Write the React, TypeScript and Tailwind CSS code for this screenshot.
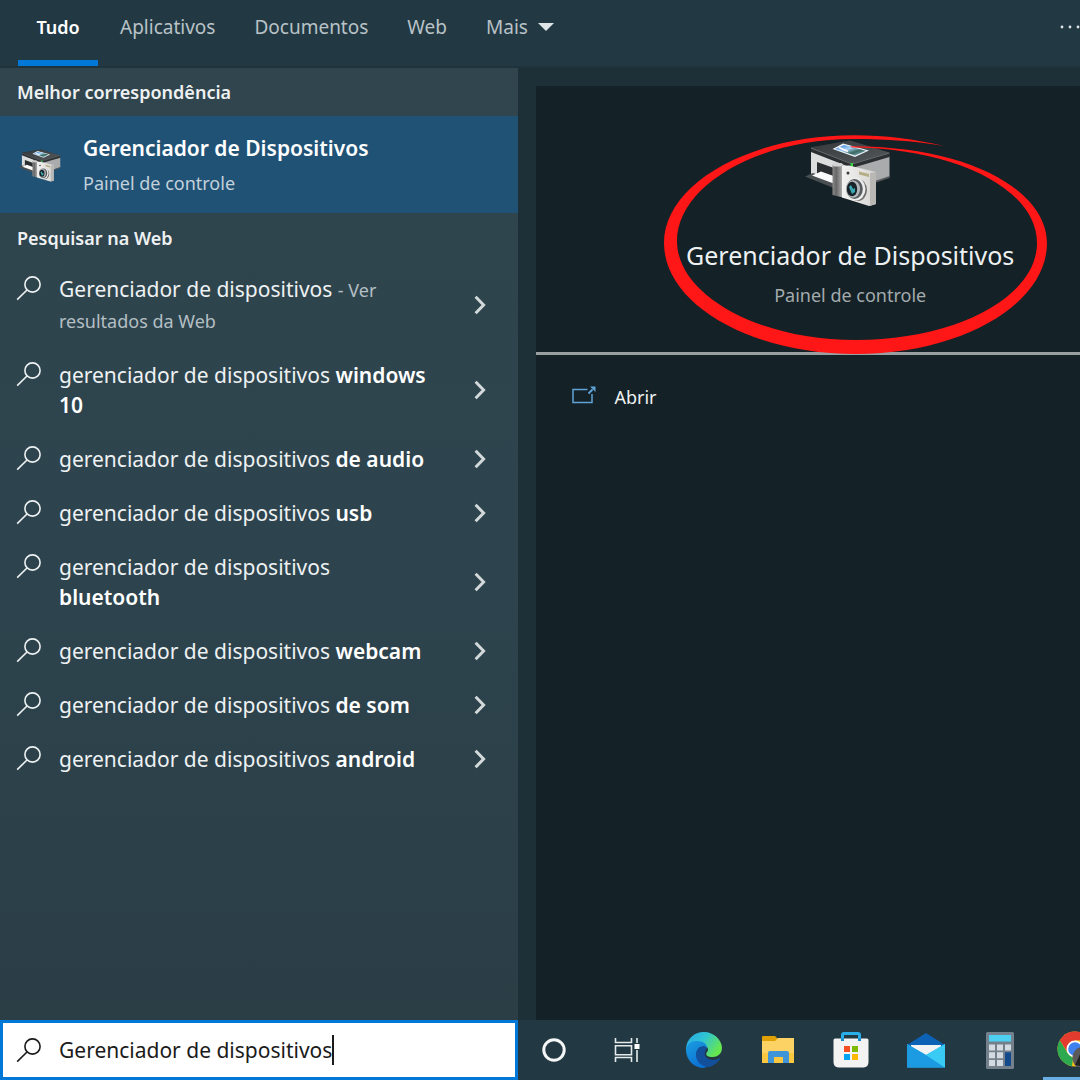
import { useState } from "react";

const tabs = ["Tudo", "Aplicativos", "Documentos", "Web"];

const suggestions = [
  "windows 10",
  "de audio",
  "usb",
  "bluetooth",
  "webcam",
  "de som",
  "android",
];

function SearchIcon() {
  return (
    <svg viewBox="0 0 26 26" className="h-[26px] w-[26px] shrink-0" fill="none" stroke="currentColor" aria-hidden="true">
      <circle cx="16.5" cy="9.5" r="7.6" strokeWidth="1.6" />
      <path d="M11 15 1.2 24.6" strokeWidth="1.6" />
    </svg>
  );
}

function Chevron() {
  return (
    <svg viewBox="0 0 12 20" className="h-5 w-3 shrink-0" fill="none" stroke="#d3d9db" strokeWidth="3" aria-hidden="true">
      <path d="M1.6 1.8 9.6 10l-8 8.2" />
    </svg>
  );
}

function DeviceIcon({ className }: { className: string }) {
  return (
    <svg viewBox="0 0 86 70" className={className} aria-hidden="true">
      <defs>
        <linearGradient id="lid" x1="0" y1="0" x2="1" y2="1">
          <stop offset="0" stopColor="#34383b" />
          <stop offset="1" stopColor="#54595c" />
        </linearGradient>
        <linearGradient id="grip" x1="0" x2="1">
          <stop offset="0" stopColor="#8b8b8b" />
          <stop offset=".35" stopColor="#666" />
          <stop offset="1" stopColor="#b5b5b5" />
        </linearGradient>
        <linearGradient id="body" x1="0" x2="1">
          <stop offset="0" stopColor="#f2f2f0" />
          <stop offset="1" stopColor="#d6d5d2" />
        </linearGradient>
        <linearGradient id="photo" x1="0" y1="0" x2="1" y2="1">
          <stop offset="0" stopColor="#2f74cf" />
          <stop offset=".4" stopColor="#a9d3f5" />
          <stop offset=".65" stopColor="#38685f" />
          <stop offset="1" stopColor="#9dc3df" />
        </linearGradient>
      </defs>
      <path d="M6 14 47 28v24L6 38z" fill="#dcdddd" />
      <path d="M47 29 84.500 19v21L47 52z" fill="#a9abac" />
      <path d="M70 44 84.500 39v2L70 46z" fill="#55585a" />
      <path d="M6 10 45 3.500 84.500 16v4L47 31 6 15z" fill="#2b2f32" />
      <path d="M6 10.500 45 3.500 84.500 15.500 47 26.500z" fill="url(#lid)" />
      <path d="M6 11 47 27l37.500-11" fill="none" stroke="#777c7f" strokeWidth=".8" />
      <path d="M27.500 12 38 6.500 64 13.500 50 20z" fill="#e9f2f8" />
      <path d="M30 12 39 8l22 5.700-11 4.800z" fill="url(#photo)" />
      <path d="m34 10.500 9 4" stroke="#fff" strokeWidth="1.600" />
      <path d="m12 25 17 6v11l-17-5z" fill="#2b2e31" />
      <path d="M0 39.500 8 36l22 8v7.500z" fill="#4a4f52" />
      <path d="m7 38.500 9-4 14 5V47z" fill="#fafafa" />
      <path d="M45.500 26h2.500v4h-2.500z" fill="#3bd13f" />
      <path d="M27.500 28c1.500-3 8.500-3 10.500 0v32.500l-10.500-2.500z" fill="url(#grip)" />
      <ellipse cx="32.700" cy="27.700" rx="5.200" ry="1.900" fill="#d4d4d4" />
      <path d="m37 29 7-.5L71 35v32l-7 2-27-8.500z" fill="url(#body)" />
      <path d="m65 36 6-1v32l-6 2z" fill="#bab8b4" />
      <path d="m54 34.500 10 2.500v3l-10-2.500z" fill="#b5ae84" />
      <circle cx="43" cy="36" r="1.500" fill="#3a3a3a" />
      <ellipse cx="53" cy="53" rx="9" ry="11" fill="#6e6e6e" />
      <ellipse cx="50.500" cy="52" rx="10" ry="11.500" fill="#ececec" />
      <ellipse cx="49.500" cy="52" rx="8.300" ry="10" fill="#565b5f" />
      <ellipse cx="48" cy="52" rx="7" ry="8.800" fill="#b4b8ba" />
      <ellipse cx="47" cy="52" rx="5.200" ry="7.300" fill="#182329" />
      <path d="m44 50 2-2 2 4 2-1v4l-3 2z" fill="#3aa9b4" />
    </svg>
  );
}

function RedCircle() {
  return (
    <svg viewBox="0 0 384 220" className="pointer-events-none absolute left-1.5 top-0 h-[220px] w-96" aria-hidden="true">
      <path
        fill="#ff1616"
        d="M280 11C250 4 222 .2 190 .2 85 .2 0 49 0 108c0 61 86 111 192 111s191-50 191-111C383 58 310 11 186 11.300l2 1.200c100 .5 185 40 185 95.500 0 54-81 97-181 97S13 159 13 106C13 52 91 4 190 4c34 0 60 2 90 7z"
      />
    </svg>
  );
}

function OpenIcon() {
  return (
    <svg viewBox="0 0 24 18" className="mb-1 h-[18px] w-6" fill="none" stroke="#5fa3d8" strokeWidth="1.500" aria-hidden="true">
      <path d="M15.500 3.500H1v13h19V8" />
      <path d="m16.500 7.500 4-4" strokeWidth="2" />
      <path d="M18 .5h5.500V6z" fill="#5fa3d8" stroke="none" />
    </svg>
  );
}

function CortanaIcon() {
  return (
    <svg viewBox="0 0 24 24" className="h-6 w-6" aria-hidden="true">
      <circle cx="12" cy="12" r="10.200" fill="none" stroke="#f4f6f7" strokeWidth="3" />
    </svg>
  );
}

function TaskViewIcon() {
  return (
    <svg viewBox="0 0 26 24" className="h-6 w-[26px]" fill="none" stroke="#e5eaec" strokeWidth="1.600" aria-hidden="true">
      <path d="M1.500 0v4.500h16V0M1.500 24v-4.500h16V24M1.500 7.800h16v9h-16zM23 0v5M23 12v12" />
      <path d="M20.500 6h5v5h-5z" fill="#fff" stroke="none" />
    </svg>
  );
}

function EdgeIcon() {
  return (
    <svg viewBox="0 0 36 36" className="h-9 w-9" aria-hidden="true">
      <defs>
        <linearGradient id="edgeTop" x1="0" y1="0" x2="1" y2=".5">
          <stop offset="0" stopColor="#2aa5e8" />
          <stop offset=".5" stopColor="#2fc4d4" />
          <stop offset="1" stopColor="#66e650" />
        </linearGradient>
        <linearGradient id="edgeLeft" x1="0" y1="0" x2=".6" y2="1">
          <stop offset="0" stopColor="#1b9de2" />
          <stop offset="1" stopColor="#0a6fd0" />
        </linearGradient>
      </defs>
      <path d="M0 18C0 7 8 0 18 0s18 8 18 16c0 6-5 9-9 9-6 0-8-2-6-5 2-2 1-6-3-6z" fill="url(#edgeTop)" />
      <path d="M0 18C1 11 6 9 11 9c7 0 11 4 10 8-1-3-6-4-9 0-5 8 3 17 13 15a18 18 0 0 1-7 4C8 36 0 28 0 18z" fill="url(#edgeLeft)" />
      <path d="M18 14c-5 0-8 4-8 9 0 8 7 12 13 12 5-1 9-5 11-8 0-1-1-1-2 0-8 3-15-2-13-7 1-2 2-4-1-6z" fill="#12509c" />
    </svg>
  );
}

function FolderIcon() {
  return (
    <svg viewBox="0 0 34 28" className="h-7 w-[34px]" aria-hidden="true">
      <path d="M1 1q0-1 1-1h12l3 3-2 3H1z" fill="#e2a007" />
      <path d="M1 5h13l3-3h16v25H1z" fill="#fdd264" />
      <path d="M1 17h32v10H1z" fill="#fac840" />
      <path d="M7 27V17q0-2 2-2h17q2 0 2 2v10h-6v-6h-9v6z" fill="#3f95d8" />
    </svg>
  );
}

function StoreIcon() {
  return (
    <svg viewBox="0 0 36 36" className="h-9 w-9" aria-hidden="true">
      <path d="M.500 8q0-1.500 1.500-1.500h32q1.500 0 1.500 1.500v22q0 5-5 5.500h-25q-5-.5-5-5.500z" fill="#f3f3f3" />
      <path d="M9.500 9V3q0-1.500 1.500-1.500h14q1.500 0 1.500 1.500v6" fill="none" stroke="#29aeea" strokeWidth="3" />
      <path d="M8 6.500h3V9H8zM25 6.500h3V9h-3z" fill="#178bc9" />
      <path d="M11 14h6v6h-6z" fill="#f25022" />
      <path d="M19 14h6v6h-6z" fill="#7fba00" />
      <path d="M11 22h6v6h-6z" fill="#00a4ef" />
      <path d="M19 22h6v6h-6z" fill="#ffb900" />
    </svg>
  );
}

function MailIcon() {
  return (
    <svg viewBox="0 0 38 36" className="h-9 w-[38px]" aria-hidden="true">
      <path d="M0 13 19 1l19 12v5H0z" fill="#0c62b4" />
      <path d="M4 13h30v8L19 26 4 21z" fill="#f1f3f5" />
      <path d="M0 12v23.500h38V12L19 23z" fill="#2db4ee" />
      <path d="M0 12v23.500h38L19 23z" fill="#1c9be2" />
      <path d="M38 12v23.500L19 23z" fill="#3acbf5" />
    </svg>
  );
}

function CalculatorIcon() {
  return (
    <svg viewBox="0 0 28 37" className="h-[37px] w-7" aria-hidden="true">
      <rect width="28" height="37" rx="1.500" fill="#74818d" />
      <path d="M3 3h22v6.500H3z" fill="#4dcff2" />
      <path
        d="M3 12.500h6v6H3zM11 12.500h6v6h-6zM19 12.500h6v6h-6zM3 20.300h6v6H3zM11 20.300h6v6h-6zM3 28h6v6H3zM11 28h6v6h-6z"
        fill="#d3dae1"
      />
      <path d="M19 20.300h6V34h-6z" fill="#124a8c" />
    </svg>
  );
}

function ChromeIcon() {
  return (
    <svg viewBox="0 0 36 36" className="h-9 w-9" aria-hidden="true">
      <circle cx="18" cy="18" r="17.500" fill="#fbc116" />
      <path d="M2.800 9.200A17.500 17.500 0 0 1 33.200 9.300H18v9l-7 4z" fill="#e33b2e" />
      <path d="M2.800 9.200 10.500 22 16 27l-1 8.200A17.500 17.500 0 0 1 2.800 9.200z" fill="#2da94f" />
      <circle cx="18" cy="18" r="8.500" fill="#fff" />
      <circle cx="18" cy="18" r="6.800" fill="#3f82ee" />
      <circle cx="27" cy="27" r="11.500" fill="#5a5a5a" />
      <path d="m18 34 6-13 4 2-5 12zM24 31l4-7v12z" fill="#222" />
    </svg>
  );
}

const apps = [
  { name: "Cortana", icon: <CortanaIcon />, box: "w-[72px]" },
  { name: "Visão de tarefas", icon: <TaskViewIcon />, box: "w-[73px]" },
  { name: "Microsoft Edge", icon: <EdgeIcon />, box: "w-[82px]" },
  { name: "Explorador de Arquivos", icon: <FolderIcon />, box: "w-[66px]" },
  { name: "Microsoft Store", icon: <StoreIcon />, box: "w-20" },
  { name: "Email", icon: <MailIcon />, box: "w-[70px]" },
  { name: "Calculadora", icon: <CalculatorIcon />, box: "w-[78px]" },
];

export default function App() {
  const [query, setQuery] = useState("Gerenciador de dispositivos");

  return (
    <div className="flex h-screen min-h-[900px] flex-col overflow-hidden bg-[#20353e] font-['Noto_Sans',sans-serif] text-[#eef1f2]">
      <header className="flex h-[68px] shrink-0 items-stretch justify-between overflow-hidden border-b-2 border-[#1e333c] bg-[#223944]">
        <nav className="flex pl-[18px] text-[19px] leading-7 text-[#b9c2c6]">
          {tabs.map((tab, i) => (
            <button
              key={tab}
              className={
                i === 0
                  ? "mr-[22px] w-20 border-b-6 border-[#0078d7] pb-1.5 text-[18px] font-semibold text-white"
                  : "mr-[39px] border-b-6 border-transparent pb-1.5"
              }
            >
              {tab}
            </button>
          ))}
          <button className="flex items-center gap-2.5 pb-3">
            Mais
            <svg viewBox="0 0 16 8" className="h-2 w-4" fill="#dfe4e6" aria-hidden="true">
              <path d="M0 0h16L8 8z" />
            </svg>
          </button>
        </nav>
        <button aria-label="Mais opções" className="-mr-1 shrink-0 pb-3">
          <svg viewBox="0 0 24 4" className="h-1 w-6" fill="#dfe4e6" aria-hidden="true">
            <circle cx="2" cy="2" r="1.400" />
            <circle cx="10" cy="2" r="1.400" />
            <circle cx="18" cy="2" r="1.400" />
          </svg>
        </button>
      </header>

      <div className="flex min-h-0 flex-1">
        <main className="w-[48%] shrink-0 bg-linear-to-b from-[#30454d] via-[#2d444e] to-[#2b3e46]">
          <h2 className="px-[17px] pt-2.5 pb-2.5 text-[18px] leading-7 font-semibold">Melhor correspondência</h2>
          <button className="flex h-[97px] w-full items-center gap-[22px] bg-[#205276] pl-[19px] text-left">
            <DeviceIcon className="h-[38px] w-[42px] shrink-0" />
            <span className="flex flex-col gap-1.5">
              <span className="text-[21px] leading-[30px] font-semibold text-white">Gerenciador de Dispositivos</span>
              <span className="text-[18px] leading-7 text-[#c3d1db]">Painel de controle</span>
            </span>
          </button>
          <h2 className="px-[17px] pt-[11px] pb-2.5 text-[18px] leading-7 font-semibold">Pesquisar na Web</h2>
          <ul className="text-[21px] leading-[30px]">
            <li>
              <button className="flex w-full items-center py-3 pr-8 pl-4 text-left">
                <span className="self-start pt-px">
                  <SearchIcon />
                </span>
                <span className="mr-auto w-[393px] pl-[17px]">
                  Gerenciador de dispositivos <span className="text-[18px] text-[#b4bfc4]">- Ver resultados da Web</span>
                </span>
                <Chevron />
              </button>
            </li>
            {suggestions.map((s) => (
              <li key={s}>
                <button className="flex w-full items-center py-3 pr-8 pl-4 text-left">
                  <span className="self-start pt-px">
                    <SearchIcon />
                  </span>
                  <span className="mr-auto w-[393px] pl-[17px]">
                    gerenciador de dispositivos <b className="font-semibold text-white">{s}</b>
                  </span>
                  <Chevron />
                </button>
              </li>
            ))}
          </ul>
        </main>

        <aside className="min-w-0 flex-1 bg-[#1d3038] pt-[18px] pl-[18px]">
          <div className="h-full overflow-hidden bg-[#142126]">
            <section className="flex h-[269px] justify-center border-b-3 border-[#9a9fa1] pt-[49px] pl-[84px]">
              <div className="relative flex w-96 flex-col items-center">
                <DeviceIcon className="mt-0.5 mr-1 h-[70px] w-[86px]" />
                <h1 className="mt-7 text-[25px] leading-10 whitespace-nowrap">Gerenciador de Dispositivos</h1>
                <p className="mt-1.5 text-[18px] leading-7 text-[#a3abae]">Painel de controle</p>
                <RedCircle />
              </div>
            </section>
            <button className="mt-7 ml-9 flex items-center gap-[18px] text-[18px] leading-7">
              <OpenIcon />
              Abrir
            </button>
          </div>
        </aside>
      </div>

      <footer className="flex h-[60px] shrink-0 bg-[#223842]">
        <label className="flex w-[48%] shrink-0 items-center border-3 border-[#0078d7] bg-white pl-[13px] text-[21px] text-[#1b1b1b]">
          <SearchIcon />
          <input
            aria-label="Pesquisar"
            value={query}
            onChange={(e) => setQuery(e.target.value)}
            className="field-sizing-content ml-[17px] leading-[30px] outline-none"
          />
          <span className="h-[30px] w-0.5 bg-[#1b1b1b]" />
        </label>
        <nav className="flex min-w-0 flex-1 overflow-hidden">
          {apps.map((app) => (
            <button key={app.name} aria-label={app.name} className={`flex shrink-0 items-center justify-center ${app.box}`}>
              {app.icon}
            </button>
          ))}
          <button aria-label="Google Chrome" className="ml-1 flex w-20 shrink-0 items-center border-b-3 border-[#68aee5] pl-3.5">
            <ChromeIcon />
          </button>
        </nav>
      </footer>
    </div>
  );
}
